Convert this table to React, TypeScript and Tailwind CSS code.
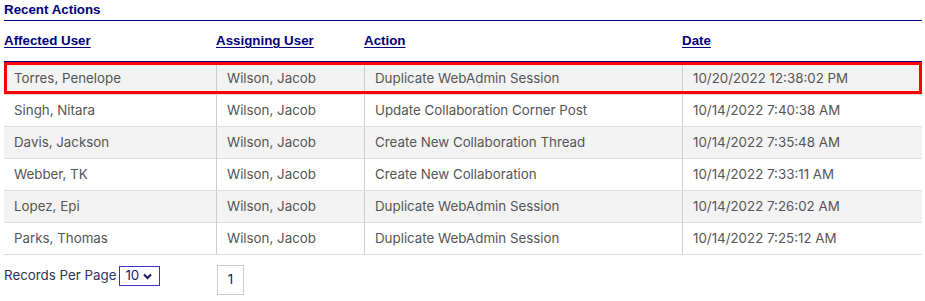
import React from "react";

type Row = { affected: string; assigning: string; action: string; date: string };

const rows: Row[] = [
  { affected: "Torres, Penelope", assigning: "Wilson, Jacob", action: "Duplicate WebAdmin Session", date: "10/20/2022 12:38:02 PM" },
  { affected: "Singh, Nitara", assigning: "Wilson, Jacob", action: "Update Collaboration Corner Post", date: "10/14/2022 7:40:38 AM" },
  { affected: "Davis, Jackson", assigning: "Wilson, Jacob", action: "Create New Collaboration Thread", date: "10/14/2022 7:35:48 AM" },
  { affected: "Webber, TK", assigning: "Wilson, Jacob", action: "Create New Collaboration", date: "10/14/2022 7:33:11 AM" },
  { affected: "Lopez, Epi", assigning: "Wilson, Jacob", action: "Duplicate WebAdmin Session", date: "10/14/2022 7:26:02 AM" },
  { affected: "Parks, Thomas", assigning: "Wilson, Jacob", action: "Duplicate WebAdmin Session", date: "10/14/2022 7:25:12 AM" },
];

const cols = "grid grid-cols-[212px_148px_318px_240px]";

export default function App() {
  return (
    <div className="w-[925px] h-[301px] bg-white px-1 font-['Inter',sans-serif]">
      <div className="w-[918px]">
        {/* Section title */}
        <div className="h-[21px] border-b border-[#000080] pt-[2px] font-['Liberation_Sans',Arial,sans-serif] text-[13.333px] font-bold leading-[16px] text-[#000080]">
          Recent Actions
        </div>

        {/* Column headings */}
        <div className={`${cols} h-[40px] items-center font-['Liberation_Sans',Arial,sans-serif] text-[13.333px] font-bold text-[#000080]`}>
          {["Affected User", "Assigning User", "Action", "Date"].map((h) => (
            <div key={h}>
              <a href="#" className="underline decoration-1 underline-offset-[2px]">
                {h}
              </a>
            </div>
          ))}
        </div>

        {/* Rows */}
        <div className="border-t-2 border-[#000080]">
          {rows.map((r, i) => (
            <div
              key={r.affected}
              className={`relative ${cols} h-[32px] border-b border-[#dddddd] text-[13.333px] text-[#555555] ${
                i % 2 === 0 ? "bg-[#f3f3f3]" : "bg-white"
              }`}
            >
              <div className="flex items-center pl-[10px]">{r.affected}</div>
              <div className="flex items-center border-l border-[#cccccc] pl-[10px]">{r.assigning}</div>
              <div className="flex items-center border-l border-[#cccccc] pl-[10px]">{r.action}</div>
              <div className="flex items-center border-l border-[#cccccc] pl-[10px]">{r.date}</div>
              {i === 0 && (
                <div className="pointer-events-none absolute inset-x-0 top-[-1px] bottom-0 border-[3px] border-[#ff0000]" />
              )}
            </div>
          ))}
        </div>

        {/* Paging */}
        <div className="flex items-start pt-[10px]">
          <div className="flex w-[212px] items-center pt-[1px]">
            <span className="text-[13.333px] text-[#33335a]">Records Per Page</span>
            <div className="ml-[3px] flex h-[20px] w-[41px] items-center gap-[4px] border border-[#3f2fc4] pl-[5px] text-[13.333px] text-[#1a1a6e]">
              <span>10</span>
              <svg width="9" height="7" viewBox="0 0 9 7" className="mt-[1px]">
                <path d="M1 1.5 L4.5 5 L8 1.5" fill="none" stroke="#1a1a6e" strokeWidth="2.2" />
              </svg>
            </div>
          </div>
          <div className="ml-px flex h-[30px] w-[27px] items-center justify-center border border-[#cccccc] text-[13.333px] text-[#1a1a4e]">
            1
          </div>
        </div>
      </div>
    </div>
  );
}
